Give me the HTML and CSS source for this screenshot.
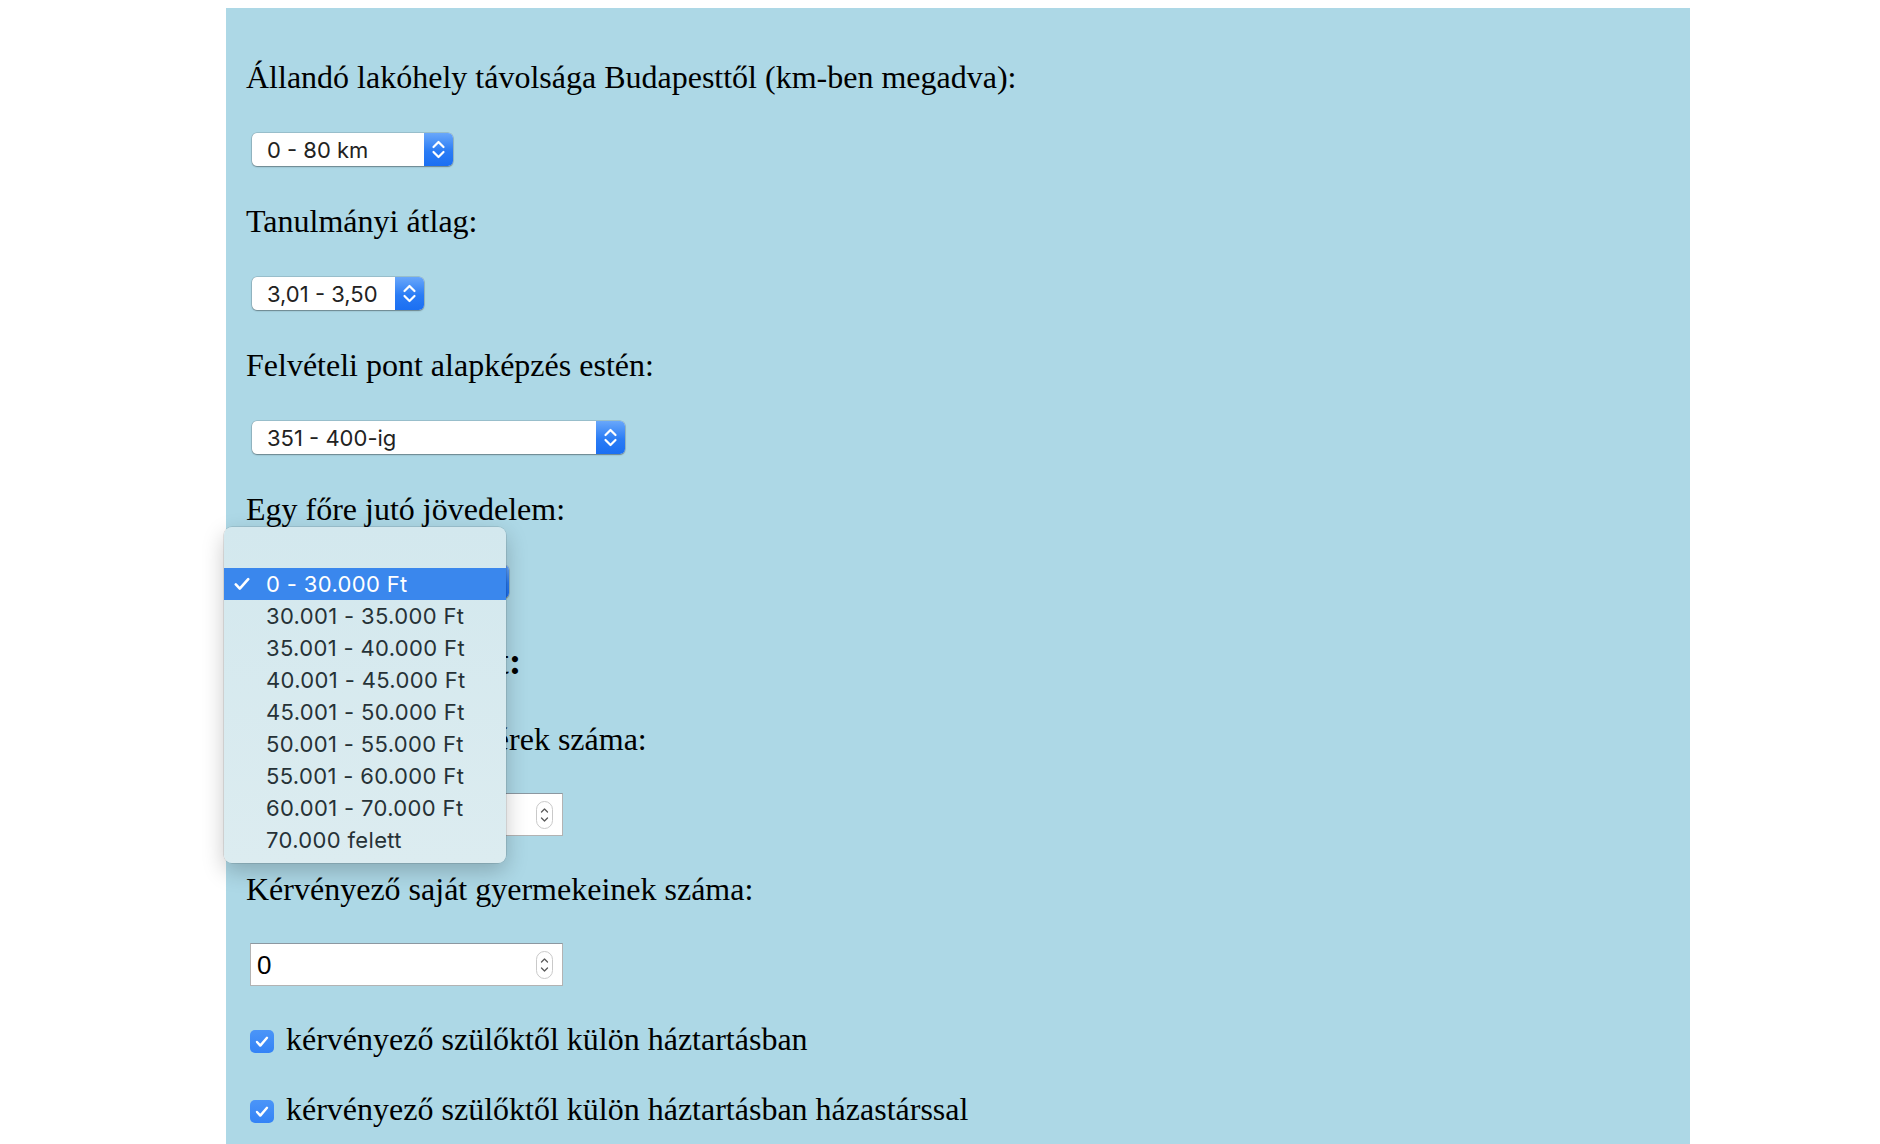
FILE: index.html
```html
<!DOCTYPE html>
<html lang="hu">
<head>
<meta charset="utf-8">
<title>Kérvény</title>
<link rel="stylesheet" href="styles.css">
</head>
<body>
<div class="panel">
  <p class="label">Állandó lakóhely távolsága Budapesttől (km-ben megadva):</p>
  <div class="field">
    <div class="select w-km">
      <span class="select-text">0 - 80 km</span>
      <span class="select-btn"><svg width="29" height="33" viewBox="0 0 29 33"><path d="M9.5 14 L14.5 9 L19.5 14 M9.5 19 L14.5 24 L19.5 19" fill="none" stroke="#fff" stroke-width="2.2" stroke-linecap="round" stroke-linejoin="round"/></svg></span>
    </div>
  </div>

  <p class="label">Tanulmányi átlag:</p>
  <div class="field">
    <div class="select w-avg">
      <span class="select-text">3,01 - 3,50</span>
      <span class="select-btn"><svg width="29" height="33" viewBox="0 0 29 33"><path d="M9.5 14 L14.5 9 L19.5 14 M9.5 19 L14.5 24 L19.5 19" fill="none" stroke="#fff" stroke-width="2.2" stroke-linecap="round" stroke-linejoin="round"/></svg></span>
    </div>
  </div>

  <p class="label">Felvételi pont alapképzés estén:</p>
  <div class="field">
    <div class="select w-pont">
      <span class="select-text">351 - 400-ig</span>
      <span class="select-btn"><svg width="29" height="33" viewBox="0 0 29 33"><path d="M9.5 14 L14.5 9 L19.5 14 M9.5 19 L14.5 24 L19.5 19" fill="none" stroke="#fff" stroke-width="2.2" stroke-linecap="round" stroke-linejoin="round"/></svg></span>
    </div>
  </div>

  <p class="label">Egy főre jutó jövedelem:</p>
  <div class="field field-open">
    <div class="select w-ft">
      <span class="select-text">0 - 30.000 Ft</span>
      <span class="select-btn"><svg width="29" height="33" viewBox="0 0 29 33"><path d="M9.5 14 L14.5 9 L19.5 14 M9.5 19 L14.5 24 L19.5 19" fill="none" stroke="#fff" stroke-width="2.2" stroke-linecap="round" stroke-linejoin="round"/></svg></span>
    </div>
    <div class="popup">
      <ul class="menu">
        <li class="item selected"><svg class="check" width="16" height="14" viewBox="0 0 16 14"><path d="M1.8 7.4 L5.8 11.6 L14.2 2.2" fill="none" stroke="#fff" stroke-width="2.6" stroke-linecap="round" stroke-linejoin="round"/></svg>0 - 30.000 Ft</li>
        <li class="item">30.001 - 35.000 Ft</li>
        <li class="item">35.001 - 40.000 Ft</li>
        <li class="item">40.001 - 45.000 Ft</li>
        <li class="item">45.001 - 50.000 Ft</li>
        <li class="item">50.001 - 55.000 Ft</li>
        <li class="item">55.001 - 60.000 Ft</li>
        <li class="item">60.001 - 70.000 Ft</li>
        <li class="item">70.000 felett</li>
      </ul>
    </div>
  </div>

  <p class="heading">Szociális helyzet:</p>
  <p class="label">Családban élő testvérek száma:</p>
  <div class="num-field">
    <div class="num-input">
      <span class="num-text"></span>
      <svg class="spin" width="17" height="28" viewBox="0 0 17 28"><rect x="0.5" y="0.5" width="16" height="27" rx="8" fill="#fff" stroke="#c9c9c9"/><path d="M5.5 11 L8.5 8 L11.5 11 M5.5 17 L8.5 20 L11.5 17" fill="none" stroke="#5a5a5a" stroke-width="1.3" stroke-linecap="round" stroke-linejoin="round"/></svg>
    </div>
  </div>

  <p class="label">Kérvényező saját gyermekeinek száma:</p>
  <div class="num-field">
    <div class="num-input">
      <span class="num-text">0</span>
      <svg class="spin" width="17" height="28" viewBox="0 0 17 28"><rect x="0.5" y="0.5" width="16" height="27" rx="8" fill="#fff" stroke="#c9c9c9"/><path d="M5.5 11 L8.5 8 L11.5 11 M5.5 17 L8.5 20 L11.5 17" fill="none" stroke="#5a5a5a" stroke-width="1.3" stroke-linecap="round" stroke-linejoin="round"/></svg>
    </div>
  </div>

  <p class="check-row"><span class="box"><svg width="24" height="23" viewBox="0 0 24 23"><path d="M7 12 L10.3 15.6 L17 7.8" fill="none" stroke="#fff" stroke-width="2.4" stroke-linecap="round" stroke-linejoin="round"/></svg></span>kérvényező szülőktől külön háztartásban</p>
  <p class="check-row"><span class="box"><svg width="24" height="23" viewBox="0 0 24 23"><path d="M7 12 L10.3 15.6 L17 7.8" fill="none" stroke="#fff" stroke-width="2.4" stroke-linecap="round" stroke-linejoin="round"/></svg></span>kérvényező szülőktől külön háztartásban házastárssal</p>
</div>
</body>
</html>
```

FILE: styles.css
```css
html, body {
  background: #ffffff;
}
body {
  margin: 8px;
  font-family: "Liberation Serif", "Times New Roman", serif;
  color: #000;
}
.panel {
  position: relative;
  margin-left: 218px;
  width: 1444px;
  padding: 51px 0 160px 20px;
  background: #add8e6;
}
.label {
  margin: 0;
  font-size: 32px;
  line-height: 36px;
}
.heading {
  margin: 0 0 40px 0;
  font-size: 38px;
  line-height: 40px;
  font-weight: bold;
}
.field {
  position: relative;
  margin: 38px 0 37px 6px;
  height: 33px;
}
.field-open {
  margin-bottom: 43px;
}
.select {
  display: flex;
  align-items: center;
  height: 33px;
  background: #fff;
  border-radius: 5px;
  box-shadow: 0 0 0 0.5px rgba(0, 0, 0, 0.22), 0 1px 1.5px rgba(0, 0, 0, 0.32);
  font-family: "Inter", "Roboto", sans-serif;
  font-size: 22px;
  color: #222;
  overflow: hidden;
}
.w-km { width: 201px; }
.w-avg { width: 172px; }
.w-pont { width: 373px; }
.w-ft { width: 257px; }
.select-text {
  flex: 1;
  padding: 1px 0 0 15px;
  white-space: nowrap;
}
.select-btn {
  width: 29px;
  height: 33px;
  flex: none;
  background: linear-gradient(#69a7fa, #2a7cf5 55%, #1b6ff2);
}
.select-btn svg {
  display: block;
}
.popup {
  position: absolute;
  left: -28px;
  top: -38px;
  width: 282px;
  height: 336px;
  box-sizing: border-box;
  padding-top: 41px;
  border-radius: 8px;
  background: linear-gradient(#d3e8ee, #dcecf0);
  box-shadow: 0 0 0 0.5px rgba(0, 0, 0, 0.18), 0 8px 22px rgba(0, 0, 0, 0.22);
  z-index: 2;
}
.menu {
  list-style: none;
  margin: 0;
  padding: 0;
}
.item {
  position: relative;
  height: 32px;
  line-height: 32px;
  padding-left: 42px;
  font-family: "Inter", "Roboto", sans-serif;
  font-size: 22px;
  letter-spacing: 0.35px;
  color: #263237;
  white-space: nowrap;
}
.item.selected {
  background: #3a87ed;
  color: #fff;
}
.check {
  position: absolute;
  left: 10px;
  top: 9px;
}
.num-field {
  margin: 36px 0 35px 4px;
}
.num-input {
  display: flex;
  align-items: center;
  justify-content: space-between;
  box-sizing: border-box;
  width: 313px;
  height: 43px;
  background: #fff;
  border: 1px solid #b3b3b3;
  border-top-color: #8c98a1;
  padding: 0 9px 0 6px;
  font-family: "Liberation Sans", Arial, sans-serif;
  font-size: 26px;
  color: #000;
}
.num-text {
  padding-top: 2px;
}
.spin {
  display: block;
}
.check-row {
  margin: 0 0 34px 4px;
  font-size: 32px;
  line-height: 36px;
}
.box {
  display: inline-block;
  width: 24px;
  height: 23px;
  margin-right: 12px;
  vertical-align: -3px;
  border-radius: 5px;
  background: linear-gradient(#4b95f8, #3483f6);
}
.box svg {
  display: block;
}
```
